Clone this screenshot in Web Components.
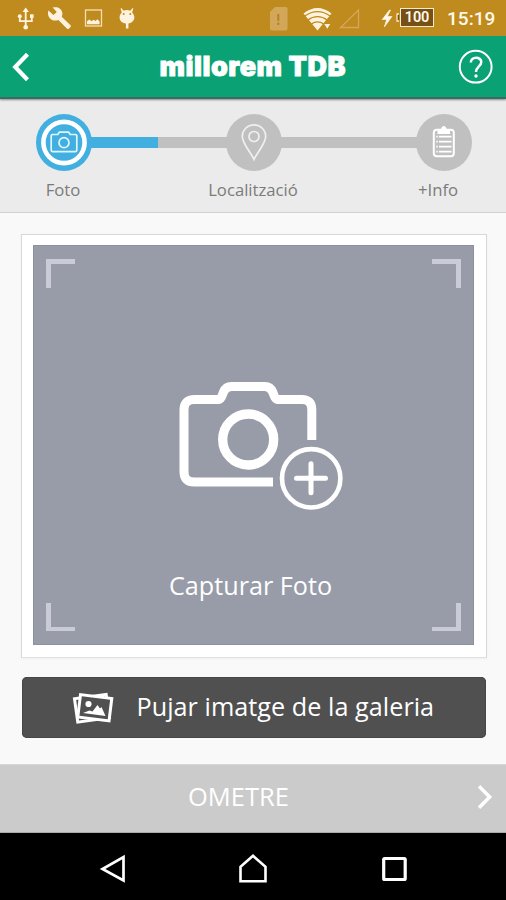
<!DOCTYPE html>
<html lang="ca">
<head>
<meta charset="utf-8">
<title>millorem TDB</title>
<style>
html,body{margin:0;height:900px;background:#f9f9f9}
body{font-family:"Open Sans","Noto Sans",sans-serif;overflow:hidden}
</style>
</head>
<body>
<report-screen></report-screen>
<script>
function define(name, html) {
  const t = document.createElement('template');
  t.innerHTML = html;
  customElements.define(name, class extends HTMLElement {
    constructor() {
      super();
      this.attachShadow({mode: 'open'}).append(t.content.cloneNode(true));
    }
  });
}

define('status-bar', `
<style>
:host{display:flex;height:36px;background:#c08b1e;color:#fff8ec;font-family:Roboto,sans-serif;justify-content:space-between}
svg{display:block;flex:none}
.right{display:flex;align-items:center}
.bat{box-sizing:border-box;width:34px;height:19px;margin:-1px 0 0 1px;border:1.5px solid #fbe9cb;background:#775015;font-weight:600;font-size:14.5px;line-height:18px;text-align:center;letter-spacing:-.2px}
.time{width:48px;margin:2px 11px 0 13px;font-weight:500;font-size:19px;line-height:22px;letter-spacing:.05px;white-space:nowrap}
</style>
<svg width="150" height="36" viewBox="0 0 150 36" fill="none" stroke="#fff3df">
  <g stroke-width="1.8"><path d="M25.7 10v17M19.8 17v4.2h12V17"/></g>
  <g fill="#fff3df" stroke="none"><path d="M25.7 7.5l3.2 4.5h-6.4z"/><circle cx="25.7" cy="27.2" r="2.3"/><circle cx="19.8" cy="16.2" r="2"/><path d="M30 14.3h3.6v3.6H30z"/>
  <path d="M48.4 10.500l5 4.600 3.400-3.200-4.100-4.300c4-1.400 9 .4 9.600 5.200.2 1.600-.1 2.800-.6 3.900l8.800 8.500c.6.600.6 1.200 0 1.800l-1.700 1.700c-.5.500-1.200.5-1.700 0l-8.700-8.800c-3.500 1.400-7.300.5-9.300-2.700-1.300-2.100-1.400-4.500-.7-6.700z"/>
  <path d="M87 24.300v-3l2.500-1.900 2 1.800 2-1.500 2 1.400 2-1.900 2 2.200v2.900z"/></g>
  <rect x="85.500" y="10" width="16" height="16" stroke-width="1.300" stroke="#f7dfb5"/>
  <g fill="#fff3df" stroke="none"><path d="M121.200 8l2.500 2.700c2-.8 4.500-.8 6.500 0L132.700 8l.6.500-1.200 4c3 3 3 7 .2 9.300-1.300 1.200-2.600 1.600-3.900 1.800v5h-2.500v-5c-4-.5-6.500-3.200-6.300-6.600.1-1.900 1-3.400 2.200-4.500l-1.200-4z"/></g>
  <circle cx="123.700" cy="14" r="1" fill="#c08b1e" stroke="none"/><circle cx="130.300" cy="14" r="1" fill="#c08b1e" stroke="none"/>
</svg>
<div class="right">
<svg width="134" height="36" viewBox="265 0 134 36">
  <path d="M275 7h11q1.500 0 1.500 1.500v20q0 2-2 2H272q-2 0-2-2V12z" fill="#d3a75a"/><path d="M277.300 14h2v7h-2zm0 8.500h2v2.500h-2z" fill="#b7821d"/>
  <path d="M303.500 13.500Q317.500 2.500 331.500 13.500L317.500 30.500z" fill="#fff3df"/>
  <g fill="none" stroke="#c08b1e" stroke-width="1.300"><path d="M304.500 16.200Q317.500 7 330.500 16.200M307.500 20.200Q317.500 13 327.500 20.200M311 24.200Q317.500 19.500 324 24.200"/></g>
  <path d="M323.500 23.500h7.500l-3.700 6z" fill="#fff3df" stroke="#c08b1e" stroke-width="1"/>
  <path d="M358.500 10v17.500h-18z" fill="none" stroke="#d3a75a" stroke-width="1.300"/>
  <path d="M389.500 10l-7.300 9.500h4.500l-2.400 7.500 7.700-10.500h-4.700l3.200-6.500z" fill="#fff8ec" stroke="#fff8ec" stroke-width=".6"/>
  <path d="M399 14h-2v7h2" fill="#775015" stroke="#fbe9cb" stroke-width="1.300"/>
</svg>
<div class="bat">100</div><div class="time">15:19</div></div>`);

define('app-header', `
<style>
:host{display:flex;box-sizing:border-box;height:63px;background:#0aa275;border-bottom:2px solid #3c6b60;align-items:center;box-shadow:0 1px 2px #888;position:relative}
h1{margin:0 auto 0 0;color:#fff;font-family:Inter,"Open Sans",sans-serif;font-size:27px;line-height:36px;font-weight:900;letter-spacing:.5px;-webkit-text-stroke:.8px #fff;white-space:nowrap}
svg{display:block;flex:none}
</style>
<svg width="159.500" height="61" viewBox="0 36 159.500 61"><path d="M27.500 54.200L15.200 67 27.500 79.800" fill="none" stroke="#fff" stroke-width="4.200"/></svg>
<h1><slot></slot></h1>
<svg width="60" height="61" viewBox="446 36 60 61" fill="none" stroke="#fff"><circle cx="475.700" cy="66.700" r="15.900" stroke-width="2"/><path d="M470.800 62.500c0-6.300 10.500-6.100 10.500-.4 0 4.200-5.300 4.400-5.300 9.900" stroke-width="2.500"/><circle cx="476" cy="76" r="1.700" fill="#fff" stroke="none"/></svg>`);

define('step-item', `
<style>
:host{display:flex;flex-direction:column;align-items:center;width:56px;position:relative;flex:none}
.dot{width:56px;height:57px;border-radius:50%;background:#c0c0c0}
:host([active]) .dot{background:#41b0e0}
.label{margin:7px 1px 0 0;font-size:16.700px;line-height:23px;color:#7b7b7b;white-space:nowrap}
:host([last]) .label{margin-left:-10px}
</style>
<div class="dot"><slot name="icon"></slot></div><div class="label"><slot></slot></div>`);

define('progress-steps', `
<style>
:host{display:flex;box-sizing:border-box;height:114px;padding:15px 34.500px 0 35.500px;background:#ebebeb;border-bottom:1px solid #d2d2d2}
.bar{flex:1;height:11px;margin:23px -3px 0;background:#c0c0c0}
.bar.half{background:linear-gradient(90deg,#41b0e0 69.500px,#c0c0c0 69.500px)}
svg{display:block}
</style>
<step-item active>
 <svg slot="icon" width="56" height="57" viewBox="0 0 56 57" fill="none" stroke="#fff"><circle cx="28" cy="28.500" r="20.600" stroke-width="4.600"/><g stroke="#e2f5fd" stroke-width="1.700"><path d="M16.500 20.500h5.300l1.600-2.400h9.200l1.600 2.400h5.300q1.300 0 1.300 1.300v14.500q0 1.300-1.300 1.300h-23q-1.300 0-1.300-1.300V21.800q0-1.300 1.300-1.300z"/><circle cx="28" cy="28.700" r="5"/></g></svg>Foto</step-item>
<div class="bar half"></div>
<step-item>
 <svg slot="icon" width="56" height="57" viewBox="0 0 56 57" fill="none" stroke="#f0f0f0" stroke-width="1.700"><path d="M28 45.500C25.500 39.500 16.300 29.500 16.300 22.500a11.700 11.700 0 0 1 23.400 0C39.700 29.500 30.500 39.500 28 45.500z"/><circle cx="28" cy="22.500" r="5"/></svg>Localització</step-item>
<div class="bar"></div>
<step-item last>
 <svg slot="icon" width="56" height="57" viewBox="0 0 56 57" fill="none" stroke="#fff"><rect x="17.800" y="15.800" width="20" height="26.500" rx="3" stroke-width="2"/><path d="M21.500 20v-4.500h3.500q.5-3.500 2.800-3.500t2.800 3.500h3.500v4.500z" fill="#fff" stroke="none"/><path d="M23 22.700h12.500M23 27.700h12.500M23 32.700h12.500M23 37.700h12.500" stroke-width="1.800"/><path d="M20.300 22.700h1.500M20.300 27.700h1.500M20.300 32.700h1.500M20.300 37.700h1.500" stroke-width="1.700"/></svg>+Info</step-item>`);

define('photo-capture', `
<style>
:host{display:block;box-sizing:border-box;height:424px;padding:10px 11px;border:1px solid #d8d8d8;border-bottom-color:#e2e2e2;background:#fff;box-shadow:0 1px 2px #eee}
.area{position:relative;height:400px;margin-right:1px;background:#989ca9;display:flex;flex-direction:column;align-items:center;box-shadow:inset 0 0 0 1px #8d919d}
i{position:absolute;width:24px;height:24px;border:0 solid #c9cbd8}
.a{left:13px;top:14px;border-width:5px 0 0 5px}.b{right:13px;top:14px;border-width:5px 5px 0 0}
.c{left:13px;bottom:14px;border-width:0 0 4px 5px}.d{right:13px;bottom:14px;border-width:0 5px 4px 0}
svg{display:block;margin:125px 0 0 13px}
p{margin:56px 6px 0 0;font-size:25.200px;line-height:34px;color:#fff;white-space:nowrap}
</style>
<div class="area"><i class="a"></i><i class="b"></i><i class="c"></i><i class="d"></i>
<svg width="180" height="142" viewBox="170 370 180 142" fill="none" stroke="#fff"><path d="M311.800 440v-30.500q0-10-10-10H277.500q-2-.3-3-3l-1.800-4.500q-2.200-5.500-8-5.500H231.500q-5.800 0-8 5.500l-1.800 4.500q-1 2.700-3 3H194.500q-10.500 0-10.500 10.500v61.700q0 10.300 10.500 10.300H273" stroke-width="9"/><circle cx="248.200" cy="439.500" r="25.500" stroke-width="9.300"/><circle cx="311.200" cy="478.300" r="29.200" stroke-width="4.600"/><path d="M296.500 478.300h29M311 463.800v29" stroke-width="5" stroke-linecap="round"/></svg>
<p><slot></slot></p></div>`);

define('gallery-button', `
<style>
:host{display:flex;box-sizing:border-box;height:61px;margin:0 1px 0 1px;padding-left:47px;border-radius:5px;background:#505050;box-shadow:inset 0 0 0 1px #464646;align-items:center}
svg{display:block;flex:none}
span{margin:-3px 0 0 17.500px;color:#fff;font-size:25.200px;line-height:34px;letter-spacing:.04px;white-space:nowrap}
</style>
<svg width="50" height="44" viewBox="69 685 50 44" stroke="#fff"><g fill="#505050" stroke-width="3"><rect x="76" y="695.500" width="32" height="23.500" transform="rotate(-8 92 707.500)"/><rect x="79" y="695.500" width="31.500" height="22.500" transform="rotate(7 94.500 707)"/></g><circle cx="88.500" cy="703" r="3.100" fill="#fff" stroke="none"/><path d="M83 712l6.500-2.500 3 1 5-6.500 2.500 3.500 1.500-1.500 4 9z" fill="#fff" stroke="none"/></svg>
<span><slot></slot></span>`);

define('skip-bar', `
<style>
:host{display:flex;box-sizing:border-box;height:69px;border-top:1px solid #d6d6d6;border-bottom:1px solid #aaa;background:#cbcbcb;align-items:center;justify-content:space-between;padding-left:188px}
span{font-size:25.500px;line-height:34px;margin-top:-5px;color:#fff;white-space:nowrap}
svg{display:block}
</style>
<span><slot></slot></span>
<svg width="36" height="67" viewBox="470 765 36 67"><path d="M479 786.300L489.700 797 479 807.700" fill="none" stroke="#fff" stroke-width="3.500"/></svg>`);

define('nav-bar', `
<style>
:host{display:flex;height:67px;background:#000;align-items:center;justify-content:space-between;padding:0 96px}
svg{display:block}
</style>
<svg width="34" height="40" viewBox="96 847 34 40"><path d="M123.500 857v23.500L102.500 869z" fill="none" stroke="#fff" stroke-width="2.700"/></svg>
<svg width="34" height="40" viewBox="236.500 847 34 40"><path d="M241 881.300v-14.500l12.500-11 12.500 11v14.500z" fill="none" stroke="#fff" stroke-width="2.600"/></svg>
<svg width="34" height="40" viewBox="376 847 34 40"><rect x="383.700" y="858.500" width="21.500" height="21" rx="1" fill="none" stroke="#fff" stroke-width="3.200"/></svg>`);

define('report-screen', `
<style>
:host{display:flex;flex-direction:column;width:506px;height:900px;background:#f9f9f9}
main{flex:1;padding:21px 19px 0 21px}
gallery-button{margin-top:19px}
</style>
<status-bar></status-bar>
<app-header>millorem TDB</app-header>
<progress-steps></progress-steps>
<main><photo-capture>Capturar Foto</photo-capture><gallery-button>Pujar imatge de la galeria</gallery-button></main>
<skip-bar>OMETRE</skip-bar>
<nav-bar></nav-bar>`);
</script>
</body>
</html>
